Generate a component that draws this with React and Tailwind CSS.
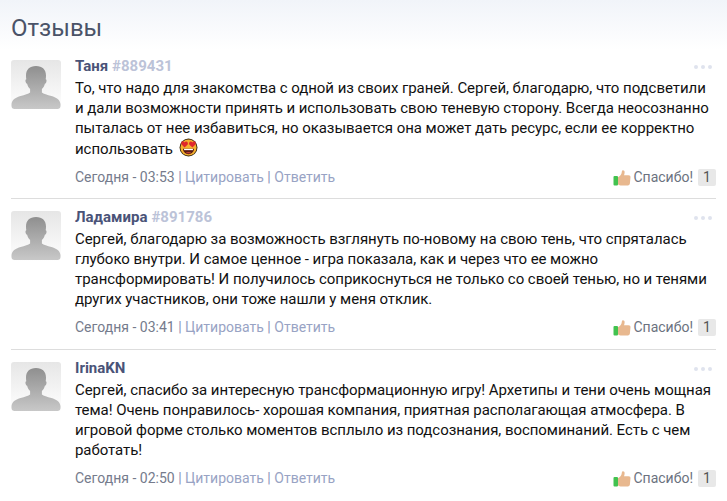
const comments = [
  {
    name: "Таня",
    id: "#889431",
    time: "Сегодня - 03:53",
    lines: [
      "То, что надо для знакомства с одной из своих граней. Сергей, благодарю, что подсветили",
      "и дали возможности принять и использовать свою теневую сторону. Всегда неосознанно",
      "пыталась от нее избавиться, но оказывается она может дать ресурс, если ее корректно",
      "использовать",
    ],
    emoji: true,
  },
  {
    name: "Ладамира",
    id: "#891786",
    time: "Сегодня - 03:41",
    lines: [
      "Сергей, благодарю за возможность взглянуть по-новому на свою тень, что спряталась",
      "глубоко внутри. И самое ценное - игра показала, как и через что ее можно",
      "трансформировать! И получилось соприкоснуться не только со своей тенью, но и тенями",
      "других участников, они тоже нашли у меня отклик.",
    ],
  },
  {
    name: "IrinaKN",
    time: "Сегодня - 02:50",
    lines: [
      "Сергей, спасибо за интересную трансформационную игру! Архетипы и тени очень мощная",
      "тема! Очень понравилось- хорошая компания, приятная располагающая атмосфера. В",
      "игровой форме столько моментов всплыло из подсознания, воспоминаний. Есть с чем",
      "работать!",
    ],
  },
]

function Avatar() {
  return (
    <div className="w-[50px] h-[50px] mt-[3px] shrink-0 rounded-[3px] overflow-hidden bg-gradient-to-b from-[#e6e6e6] to-[#ffffff]">
      <svg viewBox="0 0 50 50" className="w-full h-full">
        <defs>
          <linearGradient id="sil" x1="0" y1="0" x2="0" y2="1">
            <stop offset="0" stopColor="#8f8f8f" />
            <stop offset="1" stopColor="#c8c8c8" />
          </linearGradient>
        </defs>
        <path
          d="M25 6c-6.500 0-10 3.800-10 9.500 0 1.500.1 2.800.3 3.800-.8.2-1 1.200-.7 2.500.3 1.200.8 1.900 1.500 1.900.7 2.400 1.700 4.200 3 5.300v3.500c-1.500 1.400-5.400 2.400-9.500 3.500C5.100 37.300 1 39.500 0.500 44v2c0 1.700 1.300 3 3 3h43c1.700 0 3-1.300 3-3v-2c-.5-4.500-4.600-6.700-9.100-8-4.100-1.100-8-2.100-9.500-3.500v-3.500c1.300-1.100 2.300-2.900 3-5.300.7 0 1.200-.7 1.500-1.900.3-1.300.1-2.300-.7-2.500.2-1 .3-2.300.3-3.800 0-5.700-3.500-9.500-10-9.500z"
          fill="url(#sil)"
        />
      </svg>
    </div>
  )
}

function HeartEyes() {
  return (
    <svg viewBox="0 0 18 18" className="inline-block w-[19px] h-[19px] align-[-3px] ml-[6px]">
      <circle cx="9" cy="9" r="8.500" fill="#3a2a10" />
      <circle cx="9" cy="9" r="7.600" fill="#f5b02e" />
      <path d="M3.800 10.300h10.400c0 3-2.300 5-5.200 5s-5.200-2-5.200-5z" fill="#5a1a12" />
      <path d="M4.800 10.300h8.400v1.200H4.800z" fill="#ffffff" />
      <path d="M6.500 14c.7-.8 4.300-.8 5 0-.7.700-4.300.700-5 0z" fill="#e8503a" />
      <path d="M5.200 9 2.500 6.200C1.500 4.800 2.600 3 4 3.200c.7.100 1.100.5 1.300 1 .3-.5.800-.8 1.500-.8 1.400.1 2.200 1.800 1.300 3z" fill="#e0272c" />
      <path d="M12.800 9l2.700-2.800c1-1.400-.1-3.200-1.500-3-.7.100-1.100.5-1.300 1-.3-.5-.8-.8-1.500-.8-1.400.1-2.200 1.800-1.300 3z" fill="#e0272c" />
    </svg>
  )
}

function ThumbUp() {
  return (
    <svg viewBox="0 0 18 17" className="w-[18px] h-[17px] shrink-0">
      <rect x="0.500" y="7" width="4.500" height="9.500" rx="1" fill="#41c24f" />
      <path
        d="M5 8.200c1.500-.6 2.800-1.800 3.400-3.400.3-.9.400-2 .6-3.100.1-.7 1.800-.9 2.400.3.500 1 .1 3-.4 4.200h4.600c1.300 0 2 .9 1.900 1.900l-.6 6.400c-.1 1-.9 1.900-2 1.900H8.500c-1.400 0-2.500-.6-3.500-1z"
        fill="#e8b88f"
      />
    </svg>
  )
}

function Comment({ c, last }) {
  return (
    <div className={`relative flex gap-[14px] pt-[9px] h-[151px] ${last ? "" : "border-b border-[#dddddd]"}`}>
      <Avatar />
      <div className="flex-1 min-w-0">
        <div className="text-[15px] leading-[18px] font-bold text-[#4a5378] whitespace-nowrap">
          {c.name}
          {c.id && <span className="text-[#bcc3d8] ml-[4px]">{c.id}</span>}
        </div>
        <div className="mt-[3px] text-[15px] leading-[20px] text-[#111111] tracking-[-0.05px] whitespace-nowrap">
          {c.lines.map((line, i) => (
            <div key={i}>
              {line}
              {c.emoji && i === c.lines.length - 1 && <HeartEyes />}
            </div>
          ))}
        </div>
        <div className="flex items-center justify-between mt-[8px] text-[14px] leading-[20px]">
          <div className="text-[#757b8c] whitespace-nowrap">
            {c.time} <span className="text-[#8a93b8]">|</span>{" "}
            <span className="text-[#98a3c4]">Цитировать</span>{" "}
            <span className="text-[#8a93b8]">|</span>{" "}
            <span className="text-[#98a3c4]">Ответить</span>
          </div>
          <div className="flex items-center whitespace-nowrap">
            <ThumbUp />
            <span className="ml-[2px] text-[#6b7280]">Спасибо!</span>
            <span className="ml-[5px] w-[18px] h-[17px] rounded-[2px] bg-[#e8e8e8] text-[#555555] flex items-center justify-center text-[14px]">1</span>
          </div>
        </div>
      </div>
      <div className="absolute right-[4px] top-[17px] flex gap-[3px]">
        <span className="w-[4px] h-[4px] rounded-full bg-[#dfe3ee]" />
        <span className="w-[4px] h-[4px] rounded-full bg-[#dfe3ee]" />
        <span className="w-[4px] h-[4px] rounded-full bg-[#dfe3ee]" />
      </div>
    </div>
  )
}

export default function App() {
  return (
    <div className="w-[727px] h-[501px] overflow-hidden bg-gradient-to-b from-[#f1f4f9] to-[#ffffff] to-[50px] font-['Roboto',sans-serif]">
      <div className="pl-[11px] pr-[11px]">
        <h2 className="pt-[13px] h-[48px] text-[24px] leading-[30px] font-normal text-[#4a5368]">Отзывы</h2>
        {comments.map((c, i) => (
          <Comment key={c.name} c={c} last={i === comments.length - 1} />
        ))}
      </div>
    </div>
  )
}
